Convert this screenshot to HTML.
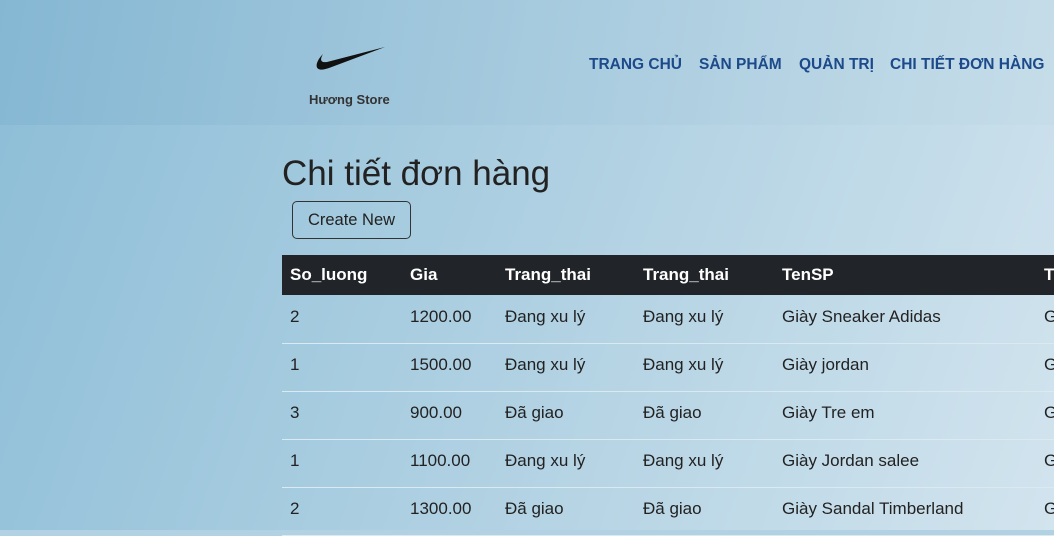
<!DOCTYPE html>
<html style="background:#b2d2e3"><head><meta charset="utf-8"><style>
body{margin:0;width:1054px;height:530px;overflow:hidden;font-family:"Liberation Sans",sans-serif;background:linear-gradient(110deg,#8cbdd7 0%,#b2d2e3 55%,#d2e4ee 100%);position:relative}
.hdr{position:absolute;left:0;top:0;width:1054px;height:125px;background:linear-gradient(100deg,#85b7d3 0%,#a6cade 50%,#c6dde9 100%)}
.brand{position:absolute;left:309px;top:92px;font-size:13px;font-weight:bold;color:#333}
.nav{position:absolute;top:56px;font-size:15.5px;font-weight:bold;color:#1c4a8a;white-space:nowrap}
h1{position:absolute;left:282px;top:154px;margin:0;font-size:35px;font-weight:normal;color:#222}
.btn{position:absolute;left:292px;top:201px;width:117px;height:36px;border:1px solid #333;border-radius:5px;font-size:16.5px;color:#222;line-height:36px;text-align:center}
table{position:absolute;left:282px;top:255px;border-collapse:collapse;width:800px;font-size:17px;color:#222}
th{background:#212529;color:#fff;text-align:left;height:40px;padding:0 8px;font-size:17px}
td{height:48px;padding:0 8px 4px;box-sizing:border-box;border-bottom:1px solid #dbe9f1}
</style></head><body>
<div class="hdr"></div>
<svg style="position:absolute;left:315px;top:46px" width="72" height="27" viewBox="0 0 72 27"><path d="M70 1 L14 22 C6 25 0 24 2 17 C3 14 5 11 8 8 C5 13 5 17 12 16 Z" fill="#111"/></svg>
<div class="brand">Hương Store</div>
<div class="nav" style="left:589px">TRANG CHỦ</div>
<div class="nav" style="left:699px">SẢN PHẨM</div>
<div class="nav" style="left:799px">QUẢN TRỊ</div>
<div class="nav" style="left:890px">CHI TIẾT ĐƠN HÀNG</div>
<h1>Chi tiết đơn hàng</h1>
<div class="btn">Create New</div>
<table>
<colgroup><col style="width:120px"><col style="width:95px"><col style="width:138px"><col style="width:139px"><col style="width:262px"><col></colgroup>
<tr><th>So_luong</th><th>Gia</th><th>Trang_thai</th><th>Trang_thai</th><th>TenSP</th><th>T</th></tr>
<tr><td>2</td><td>1200.00</td><td>Đang xu lý</td><td>Đang xu lý</td><td>Giày Sneaker Adidas</td><td>G</td></tr>
<tr><td>1</td><td>1500.00</td><td>Đang xu lý</td><td>Đang xu lý</td><td>Giày jordan</td><td>G</td></tr>
<tr><td>3</td><td>900.00</td><td>Đã giao</td><td>Đã giao</td><td>Giày Tre em</td><td>G</td></tr>
<tr><td>1</td><td>1100.00</td><td>Đang xu lý</td><td>Đang xu lý</td><td>Giày Jordan salee</td><td>G</td></tr>
<tr><td>2</td><td>1300.00</td><td>Đã giao</td><td>Đã giao</td><td>Giày Sandal Timberland</td><td>G</td></tr>
</table>
</body></html>
